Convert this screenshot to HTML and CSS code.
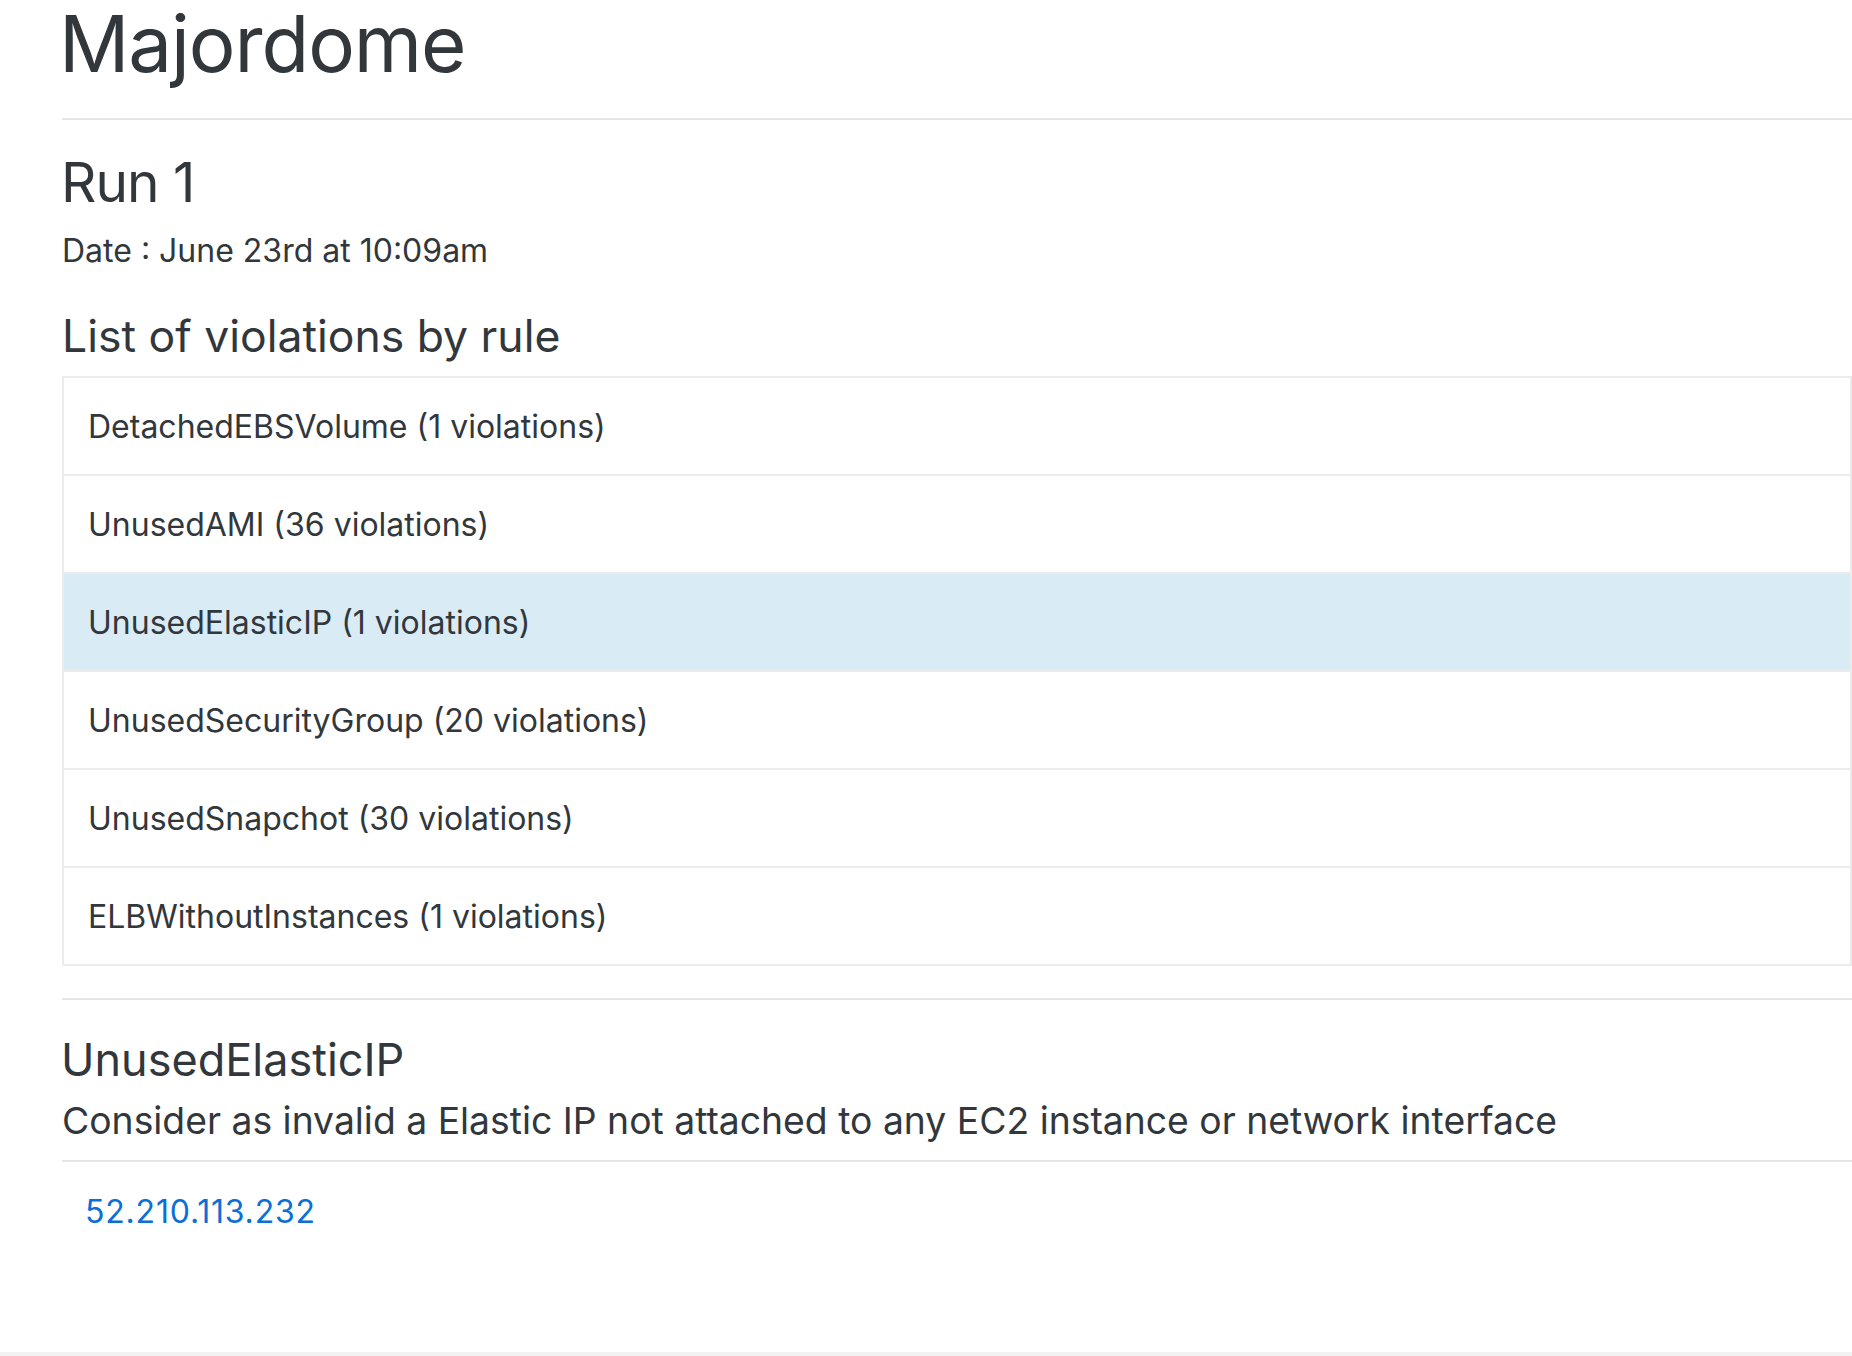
FILE: index.html
```html
<!DOCTYPE html>
<html lang="en">
<head>
<meta charset="utf-8">
<title>Majordome</title>
<link rel="stylesheet" href="styles.css">
</head>
<body>
<div class="page">
  <h1 class="title">Majordome</h1>
  <hr class="rule rule-top">
  <h3 class="run">Run 1</h3>
  <p class="date">Date : June 23rd at 10:09am</p>
  <h4 class="list-title">List of violations by rule</h4>
  <ul class="list">
    <li class="item">DetachedEBSVolume (1 violations)</li>
    <li class="item">UnusedAMI (36 violations)</li>
    <li class="item active">UnusedElasticIP (1 violations)</li>
    <li class="item">UnusedSecurityGroup (20 violations)</li>
    <li class="item">UnusedSnapchot (30 violations)</li>
    <li class="item">ELBWithoutInstances (1 violations)</li>
  </ul>
  <hr class="rule rule-mid">
  <h4 class="rule-name">UnusedElasticIP</h4>
  <h5 class="rule-desc">Consider as invalid a Elastic IP not attached to any EC2 instance or network interface</h5>
  <hr class="rule rule-low">
  <div class="resources">
    <a class="resource" href="#">52.210.113.232</a>
  </div>
</div>
</body>
</html>
```

FILE: styles.css
```css
html {
  background: #f2f2f2;
}
body {
  margin: 0;
  height: 1352px;
  background: #ffffff;
  color: #32373c;
  font-family: Inter, "Noto Sans", sans-serif;
  overflow: hidden;
}
.page {
  display: flow-root;
  padding-left: 62px;
  width: 1790px;
}
h1, h3, h4, h5, p, ul {
  margin: 0;
  font-weight: 400;
}
.title {
  font-size: 78px;
  line-height: 88px;
  margin-left: -3px;
  letter-spacing: -1.1px;
}
.rule {
  border: 0;
  border-top: 2px solid #e6e6e6;
  margin: 0;
  width: 1790px;
}
.rule-top { margin-top: 30px; }
.run {
  font-size: 55px;
  line-height: 64px;
  margin-top: 30px;
  margin-left: -1px;
  letter-spacing: -1px;
}
.date {
  font-size: 32px;
  line-height: 48px;
  margin-top: 13px;
}
.list-title {
  font-size: 44.5px;
  line-height: 54px;
  margin-top: 34px;
}
.list {
  list-style: none;
  padding: 0;
  margin-top: 13px;
  border: 2px solid #ececec;
  width: 1790px;
  box-sizing: border-box;
}
.item {
  height: 96px;
  padding: 0 24px;
  display: flex;
  align-items: center;
  font-size: 32px;
}
.item + .item {
  border-top: 2px solid #ececec;
}
.item.active {
  background: #d9ebf5;
}
.rule-mid { margin-top: 32px; }
.rule-name {
  font-size: 45px;
  line-height: 54px;
  margin-top: 33px;
  margin-left: -1px;
}
.rule-desc {
  font-size: 37.3px;
  line-height: 44px;
  margin-top: 12px;
}
.rule-low { margin-top: 17px; }
.resources {
  padding: 26px 23px 0;
}
.resource {
  color: #0a6fd6;
  text-decoration: none;
  font-size: 32px;
  line-height: 48px;
  letter-spacing: 0.8px;
}
```
